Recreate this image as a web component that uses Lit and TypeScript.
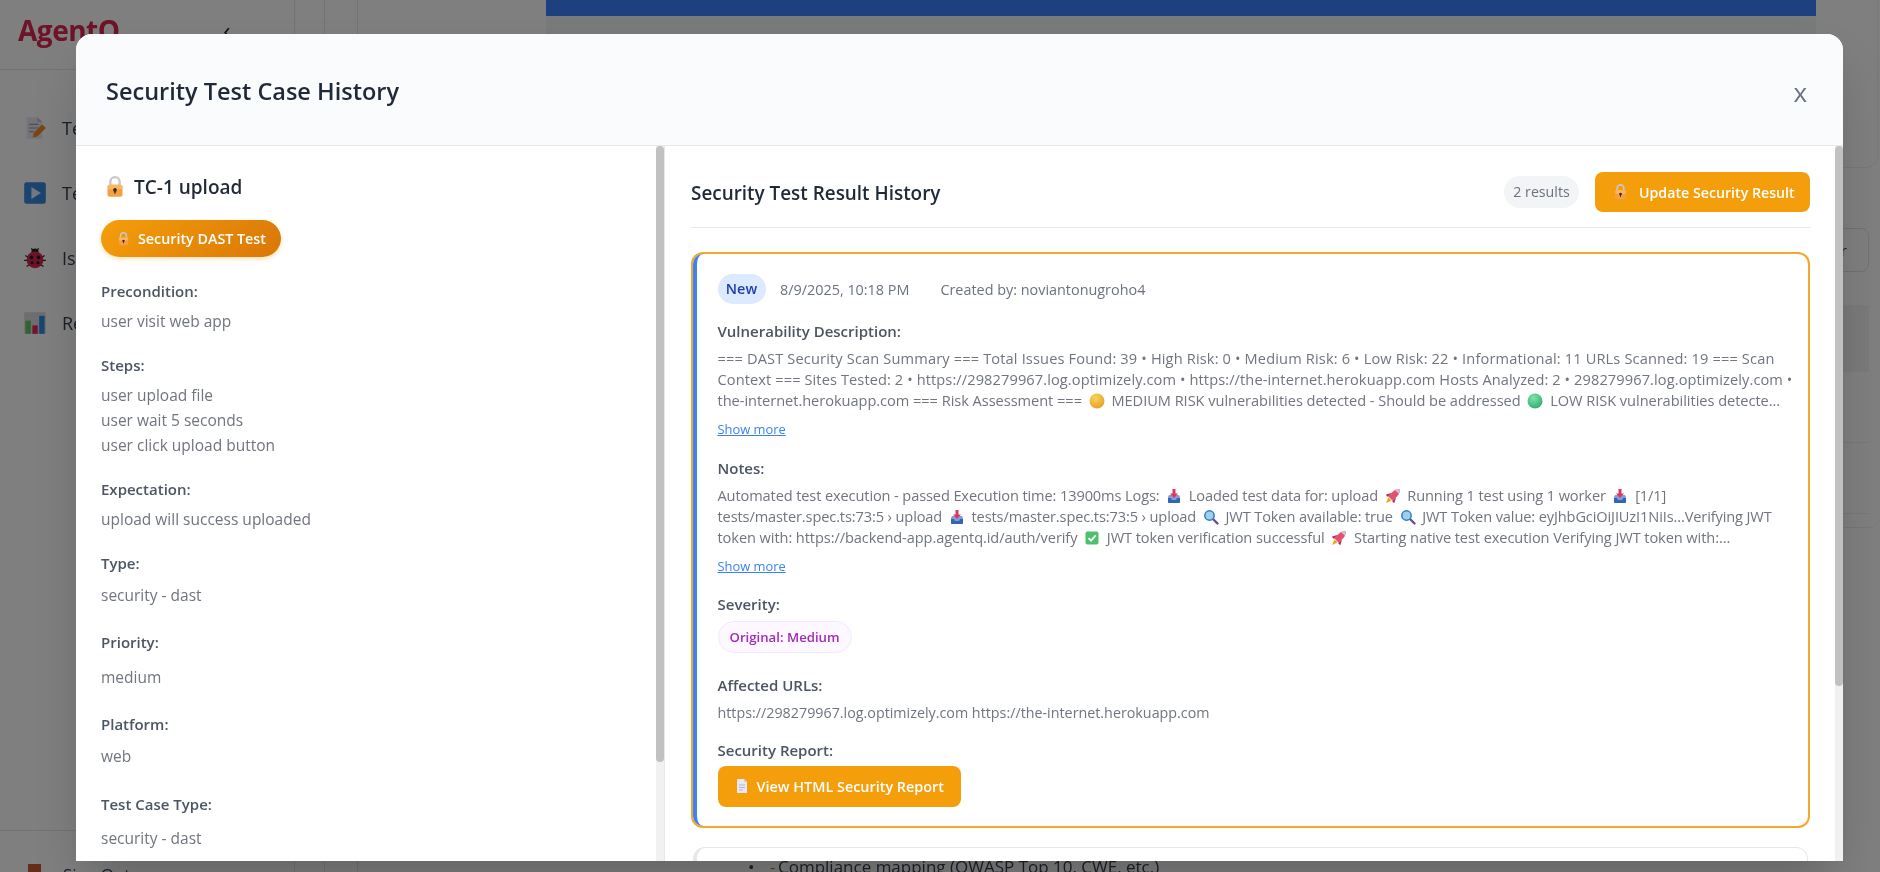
import { LitElement, css, html } from 'lit'
import { customElement } from 'lit/decorators.js'

const icons = {
  lock: html`<svg class="ic" viewBox="3 1 14 19"><path d="M6 9V6a4 4 0 0 1 8 0v3" fill="none" stroke="#c6c8d0" stroke-width="2"/><rect x="3.500" y="8.500" width="13" height="10.500" rx="2" fill="#f5a040"/><rect x="3.500" y="8.500" width="13" height="4" rx="2" fill="#fab763"/><circle cx="10" cy="13" r="1.600" fill="#3c2a1e"/><rect x="9.400" y="13" width="1.200" height="3.200" fill="#3c2a1e"/></svg>`,
  inbox: html`<svg class="ic" viewBox="0 0 16 16"><path d="M3 7h10l1 2v5a1 1 0 0 1-1 1H3a1 1 0 0 1-1-1V9z" fill="#8a9ad6"/><path d="M2 10h3l1 2h4l1-2h3v4a1 1 0 0 1-1 1H3a1 1 0 0 1-1-1z" fill="#2f67b8"/><path d="M6.500 1h3v4.500H12L8 10 4 5.500h2.500z" fill="#d93a5c"/></svg>`,
  rocket: html`<svg class="ic" viewBox="1.500 1.500 13 13"><g transform="rotate(45 8 8)"><path d="M8 0c2 2 2.600 4 2.600 6v5H5.400V6C5.400 4 6 2 8 0z" fill="#e5506f"/><path d="M8 0c1 1 1.700 2.200 2.100 3.400H5.900C6.300 2.200 7 1 8 0z" fill="#c9c6d6"/><path d="M5.400 7L3.200 11.500h2.200zM10.600 7l2.200 4.500h-2.200z" fill="#a9294e"/><path d="M6.300 11.500h3.400L8 16z" fill="#f59e0b"/></g></svg>`,
  search: html`<svg class="ic" viewBox="0 0 16 16"><line x1="9.500" y1="9.500" x2="14.500" y2="14.500" stroke="#6a4c9c" stroke-width="2.400" stroke-linecap="round"/><circle cx="6.500" cy="6.500" r="4.700" fill="#9bd0ef" stroke="#2f7fbe" stroke-width="1.500"/></svg>`,
  check: html`<svg class="ic" viewBox="0 0 16 16"><rect x="1.500" y="1.500" width="13" height="13" rx="2" fill="#4cc06c"/><polyline points="4.500,8.200 7,10.700 11.700,5.300" fill="none" stroke="#fff" stroke-width="1.800"/></svg>`,
  gold: html`<svg class="ic" viewBox="0 0 16 16"><defs><radialGradient id="gd" cx=".4" cy=".3" r=".8"><stop offset="0" stop-color="#fbd45c"/><stop offset="1" stop-color="#e59a1e"/></radialGradient></defs><circle cx="8" cy="8" r="7.500" fill="url(#gd)"/></svg>`,
  green: html`<svg class="ic" viewBox="0 0 16 16"><defs><radialGradient id="gr" cx=".4" cy=".3" r=".8"><stop offset="0" stop-color="#7fe3ac"/><stop offset="1" stop-color="#2aa868"/></radialGradient></defs><circle cx="8" cy="8" r="7.500" fill="url(#gr)"/></svg>`,
  doc: html`<svg class="ic" viewBox="0 0 16 16"><path d="M3 1h7l3 3v11H3z" fill="#ebe7f5"/><path d="M10 1l3 3h-3z" fill="#cfc8e6"/><path d="M5 7h6M5 9.500h6M5 12h4" stroke="#b9b0dc" stroke-width="1"/></svg>`,
  memo: html`<svg class="ic" viewBox="0 0 20 20"><path d="M3 1h9l4 4v14H3z" fill="#e8e6f0"/><path d="M12 1l4 4h-4z" fill="#c7c4d4"/><path d="M5 7h8M5 10h8M5 13h4" stroke="#9d9ab0" stroke-width="1"/><path d="M8 18l1-4 7-7 3 3-7 7z" fill="#f28a2e"/></svg>`,
  play: html`<svg class="ic" viewBox="0 0 20 20"><rect x="1" y="1" width="18" height="18" rx="2" fill="#3a86e0"/><path d="M7 5l8 5-8 5z" fill="#e4f0fc"/></svg>`,
  bug: html`<svg class="ic" viewBox="0 0 20 20"><path d="M2 8l3 2M18 8l-3 2M1 12h4M19 12h-4M3 17l3-2M17 17l-3-2M7 2l1.500 2M13 2l-1.500 2" stroke="#222" stroke-width="1"/><circle cx="10" cy="5" r="3" fill="#222"/><circle cx="10" cy="11.500" r="7" fill="#d8284e"/><circle cx="7" cy="9.500" r="1.500" fill="#2a1a22"/><circle cx="13" cy="9.500" r="1.500" fill="#2a1a22"/><circle cx="7.500" cy="14" r="1.300" fill="#2a1a22"/><circle cx="12.500" cy="14" r="1.300" fill="#2a1a22"/></svg>`,
  chart: html`<svg class="ic" viewBox="0 0 20 20"><rect x="1" y="1" width="18" height="18" fill="#dcdce4"/><rect x="2" y="8" width="4.500" height="11" fill="#5cc85e"/><rect x="7.800" y="12" width="4.500" height="7" fill="#e5285a"/><rect x="13.500" y="4" width="4.500" height="15" fill="#2f8fe0"/></svg>`,
}

// every wrapped line of the two long texts, with the tracking that fits it to the reference width
const descLines = [
  { ls: 0.15, c: html`=== DAST Security Scan Summary === Total Issues Found: 39 • High Risk: 0 • Medium Risk: 6 • Low Risk: 22 • Informational: 11 URLs Scanned: 19 === Scan` },
  { ls: 0.1, c: html`Context === Sites Tested: 2 • https://298279967.log.optimizely.com • https://the-internet.herokuapp.com Hosts Analyzed: 2 • 298279967.log.optimizely.com •` },
  { ls: -0.04, c: html`the-internet.herokuapp.com === Risk Assessment === ${icons.gold} MEDIUM RISK vulnerabilities detected - Should be addressed ${icons.green} LOW RISK vulnerabilities detecte...` },
]

const noteLines = [
  { ls: -0.12, c: html`Automated test execution - passed Execution time: 13900ms Logs: ${icons.inbox} Loaded test data for: upload ${icons.rocket} Running 1 test using 1 worker ${icons.inbox} [1/1]` },
  { ls: -0.12, c: html`tests/master.spec.ts:73:5 › upload ${icons.inbox} tests/master.spec.ts:73:5 › upload ${icons.search} JWT Token available: true ${icons.search} JWT Token value: eyJhbGciOiJIUzI1NiIs...Verifying JWT` },
  { ls: -0.085, c: html`token with: https://backend-app.agentq.id/auth/verify ${icons.check} JWT token verification successful ${icons.rocket} Starting native test execution Verifying JWT token with:...` },
]

// field list for the left pane; `gap` picks the label/value spacing
const fields = [
  { label: 'Precondition:', values: ['user visit web app'], gap: '' },
  { label: 'Steps:', values: ['user upload file', 'user wait 5 seconds', 'user click upload button'], gap: '' },
  { label: 'Expectation:', values: ['upload will success uploaded'], gap: '' },
  { label: 'Type:', values: ['security - dast'], gap: 'mid' },
  { label: 'Priority:', values: ['medium'], gap: 'wide' },
  { label: 'Platform:', values: ['web'], gap: 'mid' },
  { label: 'Test Case Type:', values: ['security - dast'], gap: 'wide' },
]

const nav = [
  { icon: icons.memo, name: 'Test Cases' },
  { icon: icons.play, name: 'Test Runs' },
  { icon: icons.bug, name: 'Issues' },
  { icon: icons.chart, name: 'Reports' },
]

@customElement('app-root')
export class AppRoot extends LitElement {
  static styles = css`
    :host {
      display: block;
      height: 100vh;
      overflow: hidden;
      font-family: 'Open Sans', 'Noto Sans', sans-serif;
      color: #374151;
      filter: blur(0.5px);
    }
    * { box-sizing: border-box; }
    .ic {
      display: inline-block;
      width: 16px;
      height: 16px;
      vertical-align: -3px;
      flex: none;
    }

    /* page behind the dialog */
    .page {
      display: flex;
      height: 100vh;
      overflow: hidden;
      background: #fff;
    }
    .side {
      width: 295px;
      flex: none;
      display: flex;
      flex-direction: column;
      border-right: 1px solid #e5e7eb;
    }
    .logo {
      height: 70px;
      padding: 10px 0 0 18px;
      border-bottom: 1px solid #e5e7eb;
      display: flex;
      justify-content: space-between;
      color: #dc2650;
      font-size: 28px;
      font-weight: 700;
      letter-spacing: -0.5px;
      line-height: 40px;
    }
    .chev { color: #222; font-size: 24px; font-weight: 400; padding-right: 64px; }
    .nav { flex: 1; padding-top: 25px; }
    .nav-item {
      height: 65px;
      display: flex;
      align-items: center;
      gap: 15px;
      padding-left: 23px;
      font-size: 18px;
      color: #374151;
      white-space: nowrap;
    }
    .nav-item .ic { width: 24px; height: 24px; }
    .signout {
      height: 42px;
      flex: none;
      border-top: 1px solid #e5e7eb;
      padding: 33px 0 0 28px;
      display: flex;
      gap: 22px;
      font-size: 17px;
      line-height: 22px;
      white-space: nowrap;
    }
    .door { width: 13px; height: 24px; background: #c65a32; flex: none; }
    .main {
      flex: 1;
      min-width: 0;
      display: grid;
      grid-template-columns: 30px 33px 1fr;
      overflow: hidden;
    }
    .rail { border-right: 1px solid #e5e7eb; }
    .content { min-width: 0; padding-left: 188px; }
    .hero {
      height: 168px;
      margin-right: 2px;
      padding-right: 61px;
      border: 1px solid #eef0f1;
      border-width: 0 1px 1px 0;
      border-radius: 0 0 12px 0;
    }
    .banner { height: 16px; background: #3c80fd; }
    .band { height: 152px; background: #f3f7f7; }
    .tools { display: flex; justify-content: flex-end; padding: 60px 11px 0 0; }
    .filter {
      height: 44px;
      padding: 0 21px 0 14px;
      border: 1px solid #dfe2e6;
      border-radius: 8px;
      font-size: 15px;
      line-height: 42px;
      color: #374151;
    }
    .table {
      height: 243px;
      margin-top: 13px;
      padding: 20px 11px 0 0;
      border: 1px solid #eceef0;
      border-width: 0 0 1px 0;
      border-radius: 0 0 12px 0;
    }
    .thead { height: 67px; background: #f5f5f6; }
    .trow { height: 71px; border-bottom: 1px solid #f0f1f2; }
    .report {
      display: flex;
      margin-top: 327px;
      margin-left: 202px;
      font-size: 17px;
      line-height: 24px;
      color: #374151;
      white-space: nowrap;
    }
    .bullet { width: 22px; }
    .dash { width: 8px; color: #d97706; }

    /* dialog */
    .overlay {
      position: fixed;
      inset: 0;
      padding: 34px 0 0 76px;
      background: rgba(0, 0, 0, 0.5);
    }
    .modal {
      width: 1767px;
      height: 827px;
      display: flex;
      flex-direction: column;
      background: #fff;
      border-radius: 16px 16px 0 0;
      box-shadow: 0 25px 50px -12px rgba(0, 0, 0, 0.25);
      overflow: hidden;
    }
    .m-head {
      height: 112px;
      flex: none;
      display: flex;
      align-items: center;
      justify-content: space-between;
      padding: 0 36px 0 30px;
      background: #fafbfc;
      border-bottom: 1px solid #e5e7eb;
    }
    .m-head h1 {
      margin: 2px 0 0;
      font-size: 23.500px;
      font-weight: 600;
      color: #1f2937;
    }
    .close { font-size: 26px; color: #6b7280; line-height: 30px; padding-top: 4px; }
    .m-body { flex: 1; min-height: 0; display: flex; }
    .left { width: 589px; flex: none; display: flex; border-right: 1px solid #e5e7eb; }
    .left-in { flex: 1; min-width: 0; padding: 27px 25px 0; overflow: hidden; }
    .right { flex: 1; min-width: 0; display: flex; }
    .right-in { flex: 1; min-width: 0; padding: 26px 25px 0 26px; overflow: hidden; }
    .track { width: 8px; flex: none; background: #f1f1f1; }
    .thumb { background: #c1c1c1; border-radius: 4px; }

    .tc {
      margin: 0;
      padding-left: 5px;
      display: flex;
      align-items: center;
      gap: 10px;
      font-size: 19px;
      font-weight: 600;
      line-height: 28px;
      color: #1f2937;
    }
    .tc .ic { width: 18px; height: 22px; }
    .dast {
      display: inline-flex;
      align-items: center;
      gap: 9px;
      width: 180px;
      height: 37px;
      margin-top: 19px;
      padding-left: 17px;
      border-radius: 19px;
      background: linear-gradient(135deg, #f59e0b, #d97706);
      box-shadow: 0 2px 4px rgba(245, 158, 11, 0.3);
      color: #fff;
      font-size: 14.300px;
      font-weight: 600;
      white-space: nowrap;
    }
    .dast .ic { width: 11px; height: 14px; }
    .fields { margin-top: 23.500px; }
    .field { margin-bottom: 21px; }
    .field.mid, .field.wide { margin-bottom: 24.500px; }
    .lab {
      font-size: 15px;
      font-weight: 600;
      line-height: 20px;
      color: #4b5563;
    }
    .vals { margin-top: 8px; font-size: 15.500px; line-height: 25px; color: #70757e; }
    .mid .vals { margin-top: 10px; }
    .wide .vals { margin-top: 12.500px; }

    .r-head {
      display: flex;
      align-items: center;
      gap: 16px;
      padding-bottom: 15px;
      border-bottom: 1px solid #e5e7eb;
    }
    .r-head h2 {
      flex: 1;
      margin: 2px 0 0;
      font-size: 18.900px;
      font-weight: 600;
      color: #1f2937;
    }
    .count {
      width: 75px;
      height: 32px;
      border-radius: 16px;
      background: #f3f4f6;
      color: #6b7280;
      font-size: 14.200px;
      line-height: 32px;
      text-align: center;
      white-space: nowrap;
    }
    .btn {
      display: inline-flex;
      align-items: center;
      gap: 12px;
      border-radius: 8px;
      background: #f59e0b;
      color: #fff;
      font-size: 14.200px;
      font-weight: 600;
      white-space: nowrap;
    }
    .btn.update { width: 215px; height: 40px; padding-left: 19px; }
    .btn.update .ic { width: 13px; height: 16px; }
    .btn.view { width: 243px; height: 41px; padding-left: 16px; margin-top: 6px; gap: 7px; font-size: 14.400px; }

    .card {
      margin: 26px 2px 0;
      padding: 20px 0 19px 20.500px;
      border-left: 4px solid #3b82f6;
      border-radius: 10px;
      box-shadow: 0 0 0 2px #f3a72b;
      font-size: 14.400px;
    }
    .meta { display: flex; align-items: center; height: 30px; color: #6b7280; white-space: nowrap; }
    .new {
      width: 48px;
      height: 30px;
      border-radius: 15px;
      background: #dbeafe;
      color: #1e40af;
      font-weight: 600;
      line-height: 30px;
      text-align: center;
      margin-right: 14.500px;
    }
    .created { margin-left: 31px; }
    .block { margin-top: 19.500px; }
    .block.first { margin-top: 17px; }
    .block.tight { margin-top: 16.500px; }
    .block.loose { margin-top: 22px; }
    .text { margin-top: 7px; line-height: 21px; color: #70757e; white-space: nowrap; font-size: 14.600px; }
    .text .ic { margin: 0 3px; }
    .url { font-size: 14.300px; }
    .more {
      display: block;
      margin-top: 9px;
      font-size: 12.900px;
      line-height: 18px;
      color: #3b82f6;
      text-decoration: underline;
    }
    .orig {
      display: inline-block;
      height: 32px;
      margin-top: 7px;
      padding: 0 11px;
      border: 1px solid #f3e8ff;
      border-radius: 16px;
      background: #fdf8ff;
      color: #a32bb8;
      font-size: 13.200px;
      font-weight: 600;
      line-height: 30px;
    }
    .card2 {
      height: 180px;
      margin: 21px 2px 0;
      border: 1px solid #e5e7eb;
      border-left: 4px solid #e5e7eb;
      border-radius: 12px;
    }
  `

  private line(l: { ls: number; c: unknown }) {
    return html`<div style="letter-spacing: ${l.ls}px">${l.c}</div>`
  }

  render() {
    const leftThumb = 616
    const rightThumb = 540
    return html`
      <div class="page">
        <aside class="side">
          <div class="logo">AgentQ<span class="chev">‹</span></div>
          <nav class="nav">
            ${nav.map((n) => html`<div class="nav-item">${n.icon}${n.name}</div>`)}
          </nav>
          <div class="signout"><span class="door"></span>Sign Out</div>
        </aside>
        <main class="main">
          <div class="rail"></div>
          <div class="rail"></div>
          <div class="content">
            <div class="hero"><div class="banner"></div><div class="band"></div></div>
            <div class="tools"><div class="filter">Filter</div></div>
            <div class="table">
              <div class="thead"></div>
              <div class="trow"></div>
              <div class="trow"></div>
            </div>
            <div class="report"><span class="bullet">•</span><span class="dash">-</span><span>Compliance mapping (OWASP Top 10, CWE, etc.)</span></div>
          </div>
        </main>
      </div>

      <div class="overlay">
        <div class="modal">
          <header class="m-head">
            <h1>Security Test Case History</h1>
            <span class="close">x</span>
          </header>
          <div class="m-body">
            <section class="left">
              <div class="left-in">
                <h3 class="tc">${icons.lock}TC-1 upload</h3>
                <div class="dast">${icons.lock}Security DAST Test</div>
                <div class="fields">
                  ${fields.map((f) => html`
                    <div class="field ${f.gap}">
                      <div class="lab">${f.label}</div>
                      <div class="vals">${f.values.map((v) => html`<div>${v}</div>`)}</div>
                    </div>
                  `)}
                </div>
              </div>
              <div class="track"><div class="thumb" style="height: ${leftThumb}px"></div></div>
            </section>
            <section class="right">
              <div class="right-in">
                <div class="r-head">
                  <h2>Security Test Result History</h2>
                  <span class="count">2 results</span>
                  <span class="btn update">${icons.lock}Update Security Result</span>
                </div>
                <article class="card">
                  <div class="meta">
                    <span class="new">New</span>
                    <span>8/9/2025, 10:18 PM</span>
                    <span class="created">Created by: noviantonugroho4</span>
                  </div>
                  <div class="block first">
                    <div class="lab">Vulnerability Description:</div>
                    <div class="text">${descLines.map((l) => this.line(l))}</div>
                    <a class="more">Show more</a>
                  </div>
                  <div class="block">
                    <div class="lab">Notes:</div>
                    <div class="text">${noteLines.map((l) => this.line(l))}</div>
                    <a class="more">Show more</a>
                  </div>
                  <div class="block">
                    <div class="lab">Severity:</div>
                    <span class="orig">Original: Medium</span>
                  </div>
                  <div class="block loose">
                    <div class="lab">Affected URLs:</div>
                    <div class="text url">https://298279967.log.optimizely.com https://the-internet.herokuapp.com</div>
                  </div>
                  <div class="block tight">
                    <div class="lab">Security Report:</div>
                    <span class="btn view">${icons.doc}View HTML Security Report</span>
                  </div>
                </article>
                <article class="card2"></article>
              </div>
              <div class="track"><div class="thumb" style="height: ${rightThumb}px"></div></div>
            </section>
          </div>
        </div>
      </div>
    `
  }
}
